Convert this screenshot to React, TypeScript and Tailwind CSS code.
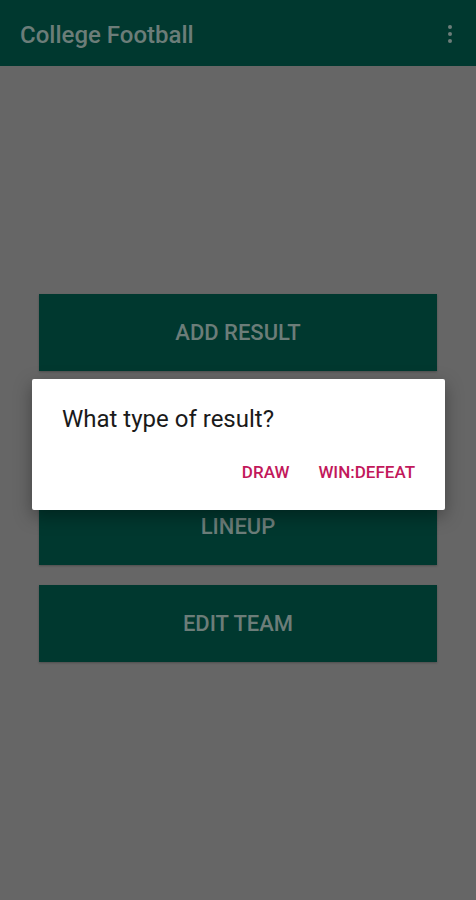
import { useState } from 'react';

const font = { fontFamily: 'Roboto, "Noto Sans", sans-serif' };

export default function App() {
  const [open] = useState(true);
  // second entry is hidden under the dialog in the shot
  const items = ['ADD RESULT', '', 'LINEUP', 'EDIT TEAM'];

  return (
    <div className="relative min-h-[900px] w-full bg-[#666666]" style={font}>
      {/* Toolbar (dimmed) */}
      <div className="flex h-[66px] items-center justify-between bg-[#00382f] pl-5 pr-[24px]">
        <span className="pt-[3px] text-[24px] font-medium text-[#6c7d79]">College Football</span>
        <div className="flex flex-col gap-[3px] pt-[2px]">
          <span className="h-[4px] w-[4px] rounded-full bg-[#6c7d79]" />
          <span className="h-[4px] w-[4px] rounded-full bg-[#6c7d79]" />
          <span className="h-[4px] w-[4px] rounded-full bg-[#6c7d79]" />
        </div>
      </div>

      {/* Menu buttons */}
      <div className="flex flex-col gap-5 px-[39px] pt-[228px]">
        {items.map((label, i) => (
          <button
            key={i}
            className="flex h-[77px] w-full items-center justify-center bg-[#00382f] text-[22px] font-medium text-[#6c7d79] shadow-[0_1px_2px_rgba(0,0,0,0.25)]"
          >
            {label}
          </button>
        ))}
      </div>

      {/* Dialog */}
      {open && (
        <div className="absolute left-[32px] top-[379px] w-[413px] rounded-[2px] bg-white shadow-[0_6px_18px_rgba(0,0,0,0.35)]">
          <div className="pl-[30px] pt-[25px] text-[24px] leading-[30px] text-[#1a1a1a]">
            What type of result?
          </div>
          <div className="flex justify-end gap-[29px] pr-[30px] pt-[27px] pb-[27px]">
            <button className="text-[17px] font-medium leading-[22px] text-[#c2185b]">DRAW</button>
            <button className="text-[17px] font-medium leading-[22px] text-[#c2185b]">WIN:DEFEAT</button>
          </div>
        </div>
      )}
    </div>
  );
}
